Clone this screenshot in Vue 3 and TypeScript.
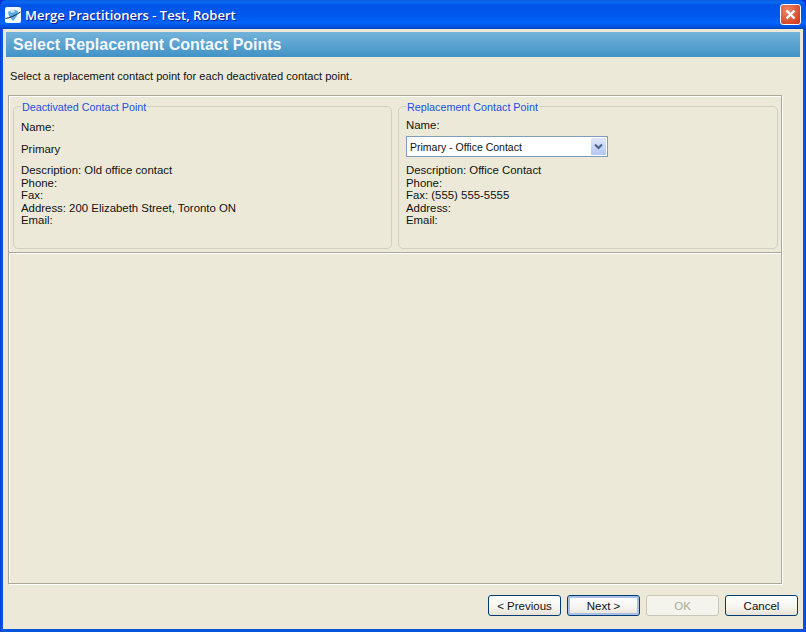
<template>
  <div class="window">
    <div class="titlebar">
      <svg class="app-icon" width="16" height="16" viewBox="0 0 16 16">
        <rect x="0" y="0" width="16" height="16" rx="2" fill="#f4f9fd" />
        <path d="M3 5 L8 2.5 L13 4 L12 9 L8 14 L4 9 Z" fill="#5aa9e6" />
        <path d="M5 3 L9 2 L10 5 L6 6 Z" fill="#cfe6f7" />
        <path d="M0.5 11.5 C5 11 10 8.5 15.5 5" stroke="#12283f" stroke-width="1" fill="none" />
      </svg>
      <span class="title-text">Merge Practitioners - Test, Robert</span>
      <button class="close-btn">
        <svg width="13" height="13" viewBox="0 0 13 13">
          <path d="M2.5 2.5 L10.5 10.5 M10.5 2.5 L2.5 10.5" stroke="#fff" stroke-width="2.4" />
        </svg>
      </button>
    </div>

    <div class="client">
      <div class="band">Select Replacement Contact Points</div>
      <p class="hint">Select a replacement contact point for each deactivated contact point.</p>

      <div class="panel">
        <div class="top-pane">
          <fieldset class="group">
            <legend>Deactivated Contact Point</legend>
            <div class="name-label">Name:</div>
            <div class="name-value">Primary</div>
            <div class="details">
              <div v-for="row in oldContact" :key="row">{{ row }}</div>
            </div>
          </fieldset>
          <fieldset class="group group-right">
            <legend>Replacement Contact Point</legend>
            <div class="name-label name-label-right">Name:</div>
            <div class="combo">
              <span class="combo-text">Primary - Office Contact</span>
              <span class="combo-arrow">
                <svg width="9" height="7" viewBox="0 0 9 7">
                  <path d="M1 1.5 L4.5 5 L8 1.5" stroke="#4d6185" stroke-width="2" fill="none" />
                </svg>
              </span>
            </div>
            <div class="details">
              <div v-for="row in newContact" :key="row">{{ row }}</div>
            </div>
          </fieldset>
        </div>
      </div>

      <div class="footer">
        <button class="btn">&lt; Previous</button>
        <button class="btn btn-default">Next &gt;</button>
        <button class="btn" disabled>OK</button>
        <button class="btn">Cancel</button>
      </div>
    </div>
  </div>
</template>

<script setup lang="ts">
const oldContact = [
  'Description: Old office contact',
  'Phone:',
  'Fax:',
  'Address: 200 Elizabeth Street, Toronto ON',
  'Email:',
]
const newContact = [
  'Description: Office Contact',
  'Phone:',
  'Fax: (555) 555-5555',
  'Address:',
  'Email:',
]
</script>

<style>
html, body { margin: 0; padding: 0; background: #0831d9; }
</style>

<style scoped>
.window {
  width: 806px;
  height: 632px;
  display: flex;
  flex-direction: column;
  box-sizing: border-box;
  overflow: hidden;
  border-radius: 7px 7px 0 0;
  background: linear-gradient(to right, #0831d9 0, #0855dd 1px, #0855dd 805px, #0831d9 806px);
  font-family: "Liberation Sans", Arial, sans-serif;
  font-size: 12px;
  color: #111;
}
.titlebar {
  height: 29px;
  flex: none;
  display: flex;
  align-items: center;
  padding: 0 5px;
  background: linear-gradient(to bottom, #0a5bdc 0, #0a6af2 2px, #0055e8 5px, #0058ee 16px, #0064fb 23px, #0050de 27px, #0040b8 29px);
}
.app-icon { flex: none; margin-right: 4px; }
.title-text {
  flex: 1;
  color: #fff;
  font-family: "Open Sans", sans-serif;
  font-size: 13px;
  font-weight: 600;
  text-shadow: 1px 1px 0 #0f1f8f;
  white-space: nowrap;
}
.close-btn {
  width: 21px;
  height: 21px;
  padding: 0;
  display: flex;
  align-items: center;
  justify-content: center;
  border: 1px solid #fff;
  border-radius: 3px;
  background: radial-gradient(circle at 35% 30%, #ec8a6e, #d9492a 70%, #c23a1c);
}
.client {
  flex: 1;
  min-height: 0;
  margin: 0 3px 3px;
  display: flex;
  flex-direction: column;
  background: #ece9d8;
}
.band {
  height: 25px;
  flex: none;
  margin: 3px 3px 0;
  padding-left: 7px;
  line-height: 25px;
  color: #f4f8fb;
  font-size: 16px;
  font-weight: bold;
  background: linear-gradient(to bottom, #73b3da, #4292c6);
}
.hint {
  margin: 13px 0 0 7px;
  height: 25px;
  line-height: 13px;
  font-size: 11.1px;
}
.panel {
  flex: 1;
  min-height: 0;
  margin: 0 21px 0 5px;
  border: 1px solid #aca899;
  box-shadow: 1px 1px 0 #fff, inset 1px 1px 0 #fff;
}
.top-pane {
  height: 157px;
  box-sizing: border-box;
  padding: 3px 3px 0 4px;
  display: flex;
  gap: 6px;
  border-bottom: 1px solid #aca899;
  box-shadow: 0 1px 0 #fff;
}
.group {
  width: 379px;
  box-sizing: border-box;
  height: 150px;
  margin: 0;
  padding: 0 0 0 7px;
  border: 1px solid #d0d0bf;
  border-radius: 5px;
  min-width: 0;
}
.group-right { width: 380px; }
.group legend {
  padding: 2px 1px 0;
  color: #2150e0;
  font-size: 10.75px;
  line-height: 13px;
}
.name-label { line-height: 13px; margin-top: 7px; font-size: 11.4px; }
.name-label-right { margin-top: 5px; }
.name-value { line-height: 13px; margin-top: 9px; font-size: 11.4px; }
.details { margin-top: 8px; font-size: 11.4px; line-height: 12.5px; }
.combo {
  width: 202px;
  height: 21px;
  box-sizing: border-box;
  margin-top: 4px;
  display: flex;
  align-items: center;
  justify-content: space-between;
  padding: 1px 1px 1px 3px;
  background: #fff;
  border: 1px solid #7f9db9;
}
.combo + .details { margin-top: 7px; }
.combo-text { font-size: 10.5px; }
.combo-arrow {
  width: 15px;
  height: 17px;
  display: flex;
  align-items: center;
  justify-content: center;
  background: linear-gradient(to bottom, #dfe8fb, #b4c7f2);
  border-radius: 1px;
}
.footer {
  flex: none;
  height: 45px;
  box-sizing: border-box;
  padding: 11px 5px 0 0;
  display: flex;
  justify-content: flex-end;
  gap: 6px;
}
.btn {
  width: 73px;
  height: 21px;
  padding: 0;
  box-sizing: border-box;
  font-family: "Liberation Sans", Arial, sans-serif;
  font-size: 11.5px;
  color: #111;
  border: 1px solid #003c74;
  border-radius: 3px;
  background: linear-gradient(to bottom, #fff, #f5f4ee 60%, #e6e3d6);
}
.btn-default {
  box-shadow: inset 0 0 0 2px #a9bfe8;
}
.btn:disabled {
  color: #aca899;
  border-color: #c9c7ba;
  background: #f4f3ec;
}
</style>
